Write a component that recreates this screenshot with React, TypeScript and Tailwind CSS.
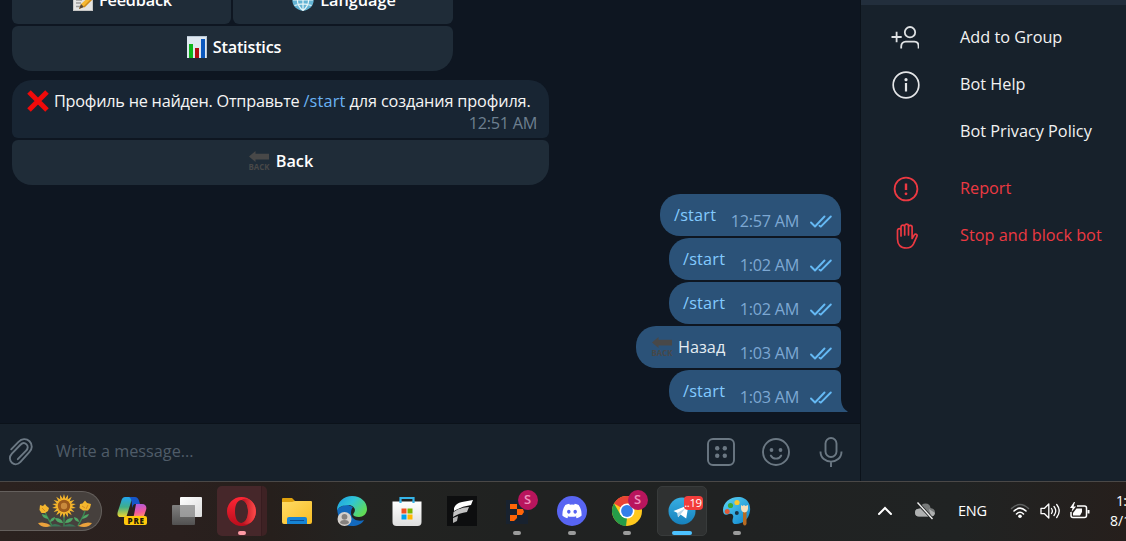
import React from "react";

const SANS = "font-['Open_Sans','Noto_Sans',sans-serif]";

function MemoIcon() {
  return (
    <svg width="20" height="22" viewBox="1 0 20 22" className="shrink-0">
      <rect x="1.500" y="1" width="19" height="20.500" fill="#e4e4e2" stroke="#c6c6c4" />
      <path d="M4 5h9M4 8h7M4 11h6M4 14h5M4 17.500h4" stroke="#9b9b9b" strokeWidth="1.300" />
      <path d="M20 5 9 15l-2 5 5-2L22 8z" fill="#f6b832" />
      <path d="M9 15l-2 5 5-2z" fill="#59493a" />
      <path d="m12 18 10-10" stroke="#cf8b17" strokeWidth="1.500" />
    </svg>
  );
}

function GlobeIcon() {
  return (
    <svg width="22" height="22" viewBox="0 0 22 22" className="shrink-0">
      <circle cx="11" cy="11" r="10.700" fill="#63b3d3" />
      <path
        d="M11 0v22M1 11h20M2.500 5.500c5 2 12 2 17 0M2.500 16.500c5-2 12-2 17 0M11 .5c-7.500 6-7.500 15 0 21M11 .5c7.500 6 7.500 15 0 21"
        fill="none"
        stroke="#e6f5f8"
        strokeWidth="1.200"
      />
    </svg>
  );
}

function ChartIcon() {
  return (
    <svg width="20" height="22" viewBox="0 0 20 22" className="shrink-0">
      <rect width="20" height="22" fill="#dfe8f0" />
      <path d="M0 .5h20M19.500 0v22" stroke="#b9c8d5" />
      <rect x="2" y="8" width="4" height="14" fill="#0eb51c" />
      <rect x="8" y="12" width="4" height="10" fill="#b20d12" />
      <rect x="14" y="3" width="4" height="19" fill="#0b58bd" />
    </svg>
  );
}

function CrossIcon() {
  return (
    <svg width="22" height="22" viewBox="0 0 22 22" className="shrink-0">
      <path d="M2 2 20 20M20 2 2 20" stroke="#f00a0a" strokeWidth="5" />
    </svg>
  );
}

function BackIcon() {
  return (
    <svg width="22" height="22" viewBox="0 0 22 22" className="shrink-0">
      <path d="M1 6.500 7.500 1v2.700H21v5.800H7.500V12z" fill="#484848" />
      <text
        x="0.500"
        y="20"
        textLength="21"
        lengthAdjust="spacingAndGlyphs"
        fontFamily="Open Sans"
        fontWeight="700"
        fontSize="9"
        fill="#484848"
      >
        BACK
      </text>
    </svg>
  );
}

function Checks() {
  return (
    <svg width="22" height="13" viewBox="0 0 22 13" className="shrink-0" fill="none" stroke="#65b9f4" strokeWidth="1.900" strokeLinecap="round" strokeLinejoin="round">
      <path d="m1 7.500 4 4L14.500 1.500M9.500 10.800l1.300.8L20.800 1.500" />
    </svg>
  );
}

function KeyButton({ icon, label, className }: { icon: React.ReactNode; label: string; className: string }) {
  return (
    <div className={`flex items-center justify-center bg-[#1f2c38] pb-[3px] font-semibold text-white ${className}`}>
      {icon}
      <span className="ml-[6px] whitespace-nowrap">{label}</span>
    </div>
  );
}

function Outgoing({
  text,
  time,
  className,
  command = true,
  tail = false,
}: {
  text: string;
  time: string;
  className: string;
  command?: boolean;
  tail?: boolean;
}) {
  return (
    <div className={`relative flex h-[42px] shrink-0 items-start justify-between self-end bg-[#2b5278] pl-[14px] pr-[9px] ${className}`}>
      <div className={`flex h-[41px] items-center ${command ? "tracking-[0.2px] text-[#83caff]" : "text-[#e4ecf2]"}`}>
        {!command && (
          <span className="ml-[1px] mr-[5px]">
            <BackIcon />
          </span>
        )}
        <span className="whitespace-nowrap">{text}</span>
      </div>
      <div className="flex h-[54px] items-center text-[#7da8d3]">
        <span className="mr-[11px] whitespace-nowrap tracking-[-0.3px]">{time}</span>
        <Checks />
      </div>
      {tail && (
        <svg width="8" height="14" viewBox="0 0 8 14" className="absolute -right-[7px] bottom-0">
          <path d="M0 0h1c0 6 2 11 6.500 13.300V14H0z" fill="#2b5278" />
        </svg>
      )}
    </div>
  );
}

function Chat() {
  return (
    <div className="flex h-[423px] flex-col overflow-hidden bg-[#0e1621] pl-[12px] pr-[19px]">
      <div className="flex h-[24px] w-[441px] shrink-0 items-end gap-[2px] overflow-hidden">
        <KeyButton icon={<MemoIcon />} label="Feedback" className="h-[45px] w-[219px] rounded-[6px] pl-[2px] tracking-[-0.2px]" />
        <KeyButton icon={<GlobeIcon />} label="Language" className="h-[45px] w-[220px] rounded-[6px] pl-[2px]" />
      </div>
      <KeyButton
        icon={<ChartIcon />}
        label="Statistics"
        className="mt-[2px] h-[45px] w-[441px] shrink-0 rounded-b-[20px] rounded-t-[6px] pl-[3px] tracking-[-0.2px]"
      />
      <div className="mt-[9px] h-[58px] w-[537px] shrink-0 rounded-b-[6px] rounded-t-[20px] bg-[#182533] pl-[15px] pr-[12px] pt-[10px] text-[#f5f5f5]">
        <div className="flex h-[22px] items-center">
          <CrossIcon />
          <span className="ml-[5px] whitespace-nowrap tracking-[-0.24px]">
            Профиль не найден. Отправьте <span className="tracking-[0.2px] text-[#6ab3f3]">/start</span>{" "}
            <span className="tracking-[-0.13px]">для создания профиля.</span>
          </span>
        </div>
        <div className="text-right leading-[22px] tracking-[-0.3px] text-[#6d7f8f]">12:51 AM</div>
      </div>
      <KeyButton
        icon={<BackIcon />}
        label="Back"
        className="mt-[2px] h-[45px] w-[537px] shrink-0 rounded-b-[20px] rounded-t-[6px]"
      />
      <div className="mt-[9px] flex flex-col gap-[2px]">
        <Outgoing text="/start" time="12:57 AM" className="w-[181px] rounded-[20px] rounded-br-[6px]" />
        <Outgoing text="/start" time="1:02 AM" className="w-[172px] rounded-l-[20px] rounded-r-[6px]" />
        <Outgoing text="/start" time="1:02 AM" className="w-[172px] rounded-l-[20px] rounded-r-[6px]" />
        <Outgoing text="Назад" time="1:03 AM" command={false} className="w-[205px] rounded-l-[20px] rounded-r-[6px]" />
        <Outgoing text="/start" time="1:03 AM" tail className="w-[172px] rounded-l-[20px] rounded-tr-[6px]" />
      </div>
    </div>
  );
}

function Composer() {
  return (
    <div className="flex h-[58px] items-center border-t border-[#0b121a] bg-[#17212b] pb-[1px] pl-[8px] pr-[16px] text-[#6b7883]">
      <svg width="28" height="30" viewBox="0 0 28 30" fill="none" stroke="currentColor" strokeWidth="1.900" strokeLinecap="round" strokeLinejoin="round">
        <path d="M3.200 11.500 10.500 4c3.200-3.300 7.800-3.700 11-.6s2.900 7.800-.2 11L12.500 24c-2.600 2.800-6 3.200-8.600.9-2.700-2.400-2.700-6.200 0-9l8.300-8.700c2-2.100 4.500-2.300 6.300-.6s1.600 4.200-.4 6.300L9.800 21.400M9.800 21.400" transform="translate(0 .8)" />
        <path d="M10.200 19.500 16 13.300" transform="translate(0 .8)" stroke="none" />
      </svg>
      <span className="ml-[20px] flex-1 pb-[2px] text-[#4f5c68]">Write a message...</span>
      <div className="flex items-center gap-[27px]">
        <svg width="28" height="28" viewBox="0 0 28 28" fill="none" stroke="currentColor" strokeWidth="1.900">
          <rect x="1" y="1" width="26" height="26" rx="5" />
          <g fill="currentColor" stroke="none">
            <circle cx="10.200" cy="10.200" r="2.200" />
            <circle cx="17.800" cy="10.200" r="2.200" />
            <circle cx="10.200" cy="17.800" r="2.200" />
            <circle cx="17.800" cy="17.800" r="2.200" />
          </g>
        </svg>
        <svg width="28" height="28" viewBox="0 0 28 28" fill="none" stroke="currentColor" strokeWidth="1.900" strokeLinecap="round">
          <circle cx="14" cy="14" r="13" />
          <path d="M8.800 17.500c2 4.200 8.400 4.200 10.400 0" />
          <circle cx="9.500" cy="12" r="1.900" fill="currentColor" stroke="none" />
          <circle cx="18.500" cy="12" r="1.900" fill="currentColor" stroke="none" />
        </svg>
        <svg width="26" height="30" viewBox="0 0 26 30" fill="none" stroke="currentColor" strokeWidth="1.900" className="ml-px">
          <rect x="7.500" y="1" width="11" height="19" rx="5.500" />
          <path d="M2.500 14.500c0 13.500 21 13.500 21 0M13 24.500V30" />
        </svg>
      </div>
    </div>
  );
}

function MenuRow({ icon, label, className = "" }: { icon?: React.ReactNode; label: string; className?: string }) {
  return (
    <div className={`flex h-[47px] shrink-0 items-center ${className}`}>
      <div className="flex w-[90px] justify-center">{icon}</div>
      <span className="ml-[9px] whitespace-nowrap pb-[1px]">{label}</span>
    </div>
  );
}

function InfoPanel() {
  return (
    <aside className="flex h-[481px] w-[266px] shrink-0 flex-col border-l border-[#0b121a] bg-[#17212b] text-[#f2f2f2]">
      <div className="h-[5px] shrink-0 bg-[#222e3c]" />
      <div className="flex flex-col pt-[9px]">
        <MenuRow
          label="Add to Group"
          icon={
            <svg width="28" height="23" viewBox="0 0 28 23" className="mr-[3px]" fill="none" stroke="#dfe2e4" strokeWidth="1.800">
              <circle cx="19" cy="6.200" r="5.200" />
              <path d="M10.200 22.500v-2c0-3 2-4.800 4.500-4.800h8.600c2.500 0 4.300 1.800 4.300 4.800v2M.5 11h10.200M5.600 5.800v10.400" />
            </svg>
          }
        />
        <MenuRow
          label="Bot Help"
          icon={
            <svg width="28" height="28" viewBox="0 0 28 28" fill="none" stroke="#e4e6e8" strokeWidth="1.700" className="mt-px">
              <circle cx="14" cy="14" r="12.800" />
              <path d="M14 12v8.500" strokeWidth="2.200" />
              <circle cx="14" cy="8.700" r="1.600" fill="#e4e6e8" stroke="none" />
            </svg>
          }
        />
        <MenuRow label="Bot Privacy Policy" />
        <MenuRow
          className="mt-[10px] text-[#ec3942]"
          label="Report"
          icon={
            <svg width="26" height="26" viewBox="0 0 26 26" fill="none" stroke="currentColor" strokeWidth="1.800" className="mt-px">
              <circle cx="13" cy="13" r="11.400" />
              <path d="M13 7.500v6.500" strokeWidth="2.400" />
              <circle cx="13" cy="17.800" r="1.400" fill="currentColor" stroke="none" />
            </svg>
          }
        />
        <MenuRow
          className="text-[#ec3942]"
          label="Stop and block bot"
          icon={
            <svg width="22" height="26" viewBox="0 0 22 26" fill="none" stroke="currentColor" strokeWidth="1.700" strokeLinecap="round" strokeLinejoin="round" className="ml-[2px]">
              <path d="M1.500 16V7.500c0-2.500 3.500-2.500 3.500 0V13M5 12V4c0-2.500 3.700-2.500 3.700 0v8M8.700 4V3c0-2.500 3.800-2.500 3.800 0v9M12.500 5V4c0-2.300 3.600-2.300 3.600 0v11.500l2.200-3.600c1-1.600 3.400-.4 2.600 1.400l-3.400 7.500C16 23.700 13.500 25 10.500 25c-6 0-9-3.500-9-9" />
            </svg>
          }
        />
      </div>
    </aside>
  );
}

function Slot({
  children,
  bar,
  className = "",
  badge,
}: {
  children: React.ReactNode;
  bar?: string;
  className?: string;
  badge?: React.ReactNode;
}) {
  return (
    <div className="flex h-[59px] w-[55px] shrink-0 justify-center pt-[4px]">
      <div className={`relative flex h-[50px] w-[50px] items-center justify-center rounded-[5px] ${className}`}>
        {children}
        {badge}
        {bar && <span className={`absolute bottom-px h-[4px] rounded-full ${bar}`} />}
      </div>
    </div>
  );
}

function ProfileBadge() {
  return (
    <span className="absolute right-[4px] top-[4px] flex h-[20px] w-[20px] items-center justify-center rounded-full bg-[#b9155d] pb-px text-[13px] font-semibold leading-none text-[#f092bd]">
      S
    </span>
  );
}

function Sunflowers() {
  const petals = Array.from({ length: 18 }, (_, i) => i * 20);
  return (
    <svg width="54" height="34" viewBox="0 0 54 34" className="shrink-0">
      <path d="M26 32V22M7 18c2 6 5 9 7 14M47 17c-2 7-5 10-7 15" fill="none" stroke="#3b8a52" strokeWidth="1.300" />
      <path d="M25 29q-7 0-8-5 7 0 8 5zM27 29q7 0 8-5-7 0-8 5zM10 25q-6-1-6-5 6 1 6 5zM12 28q5-1 5-5-5 1-5 5zM44 25q6-1 7-5-6 1-7 5zM41 28q-5-1-5-5 5 1 5 5z" fill="#4fa765" />
      <path d="M0 29q7-2 14 3-10 3-14-3zM54 29q-7-2-14 3 10 3 14-3z" fill="#eba23c" />
      <path d="M10 32.500q7-5 14 0zM24 32.500q8-5 14 0z" fill="#3a7557" />
      <path d="m2 11 3 1 2-2 1.500 2 2.500 2-1 3-3 2H3.500L1.500 16z" fill="#f4b62e" />
      <path d="m42 10 2.500-.5L47 6.500l2 2.500 4 1-1 4-2 2.500h-5L41.500 14z" fill="#f4b62e" />
      <path d="m4 14 3 3M44 12l3 2M50 11l-2 4" stroke="#d98c1c" />
      {petals.map((a) => (
        <path key={a} d="M24.300 6 26 0 27.700 6 26 12z" fill="#f6b62c" transform={`rotate(${a} 26 12)`} />
      ))}
      <circle cx="26" cy="12" r="6.200" fill="#9c5a1c" />
      <circle cx="26" cy="12" r="3.200" fill="#c98a3c" />
    </svg>
  );
}

function Taskbar() {
  return (
    <div className="flex h-[60px] w-full overflow-hidden border-t border-[#4a4847] bg-[linear-gradient(90deg,#2b221f_0%,#2a201e_16%,#261f1c_24%,#232321_32%,#202221_45%,#202222_65%,#202323_85%,#261f1c_100%)] text-white">
      <div className="flex w-[104px] shrink-0 items-start pt-[9px]">
        <div className="flex h-[40px] w-[102px] items-center justify-end rounded-r-[20px] border-y border-r border-[#65605d] bg-[#46403d] pr-[9px]">
          <Sunflowers />
        </div>
      </div>

      <div className="flex shrink-0">
        <Slot>
          <svg width="30" height="30" viewBox="0 0 30 30">
            <defs>
              <linearGradient id="copA" x1="0" y1="0" x2="0" y2="1">
                <stop offset="0" stopColor="#22a5f0" />
                <stop offset=".5" stopColor="#3fae8a" />
                <stop offset="1" stopColor="#f2d72c" />
              </linearGradient>
              <linearGradient id="copB" x1="0" y1="0" x2=".2" y2="1">
                <stop offset="0" stopColor="#a45be8" />
                <stop offset=".6" stopColor="#f4599a" />
                <stop offset="1" stopColor="#ffa35a" />
              </linearGradient>
            </defs>
            <path d="M19 8h6c4 0 5 3 4 6l-2 6c-1 3-3 4-6 4h-8c2 0 3-2 4-5z" fill="url(#copB)" />
            <path d="M9 1h10c-3 0-4 2-5 5l-4 13c-.5 2-2 2-4 2H4c-4 0-4-3-3-6l3-9c1-4 2-5 5-5z" fill="url(#copA)" />
            <path d="M12 1h6c3 0 4 3 5 7h-4c-3 0-3 2-4 4 0-5 0-9-3-11z" fill="#1656c9" />
            <rect x="7" y="20" width="23" height="9" rx="2" fill="#ffc90b" />
            <text x="10.500" y="27.500" fontFamily="Open Sans" fontSize="8" fontWeight="800" textLength="16.500" fill="#1e1a0a">
              PRE
            </text>
          </svg>
        </Slot>
        <Slot>
          <svg width="30" height="28" viewBox="0 0 30 28">
            <defs>
              <linearGradient id="tv" x1="0" y1="0" x2="1" y2="1">
                <stop stopColor="#fff" />
                <stop offset="1" stopColor="#dcdcdc" />
              </linearGradient>
              <linearGradient id="tg" x1="0" y1="0" x2="0" y2="1">
                <stop stopColor="#888" />
                <stop offset="1" stopColor="#555" />
              </linearGradient>
            </defs>
            <rect x="8" y="0" width="22" height="20" rx="1" fill="url(#tv)" />
            <rect x="0" y="8" width="23" height="20" rx="1" fill="url(#tg)" opacity=".92" />
            <path d="M8 8h15v12H8z" fill="#aaa" opacity=".7" />
          </svg>
        </Slot>
        <Slot
          className="bg-[linear-gradient(90deg,#46272a_44px,#371c1f_44px,#371c1f_45px,#3e2224_45px)]"
          bar="w-[8px] bg-[#ff9aa5]"
        >
          <svg width="29" height="29" viewBox="0 0 29 29">
            <defs>
              <linearGradient id="op" x1="0" y1="0" x2="0" y2="1">
                <stop stopColor="#ff2635" />
                <stop offset="1" stopColor="#b90d1c" />
              </linearGradient>
              <linearGradient id="op2" x1="0" y1="0" x2="1" y2="0">
                <stop stopColor="#b60f1c" />
                <stop offset="1" stopColor="#ff4b4b" />
              </linearGradient>
            </defs>
            <path fillRule="evenodd" d="M14.500 0a14.500 14.500 0 1 0 0 29 14.500 14.500 0 0 0 0-29M14.500 3c4 0 6.500 5 6.500 11.500S18.500 26 14.500 26 8 21 8 14.500 10.500 3 14.500 3" fill="url(#op)" />
            <path d="M14.500 3c3-2 7-1.700 10 1 5.800 5.400 5.800 15.500 0 21-3 2.500-7 2.800-10 1 4-.5 6.500-5.500 6.500-11.500S18.500 3.500 14.500 3" fill="url(#op2)" />
          </svg>
        </Slot>
        <Slot>
          <svg width="30" height="28" viewBox="0 0 30 28">
            <defs>
              <linearGradient id="fo" x1="0" y1="0" x2="1" y2="1">
                <stop stopColor="#ffdb65" />
                <stop offset="1" stopColor="#f8bd24" />
              </linearGradient>
            </defs>
            <path d="M0 2q0-1 1-1h9l3 3v6H0z" fill="#e0a10d" />
            <path d="M0 5h10l3-1h16q1 0 1 1v20q0 2-2 2H2q-2 0-2-2z" fill="url(#fo)" />
            <path d="M5 27v-5q0-2 2-2h16q2 0 2 2v5z" fill="#1684d5" />
            <path d="M8 23.500h14" stroke="#0a4c91" />
          </svg>
        </Slot>
        <Slot>
          <svg width="30" height="30" viewBox="0 0 30 30">
            <defs>
              <linearGradient id="ed" x1="0" y1="0" x2="1" y2=".6">
                <stop stopColor="#1c9ce5" />
                <stop offset=".5" stopColor="#30c5d5" />
                <stop offset="1" stopColor="#60db56" />
              </linearGradient>
            </defs>
            <path d="M0 13c1 10 6 17 15 17 5 0 10-2 12-6-5 2-13 0-13-7 0-3 1-5 2-6L9 8z" fill="#1269bd" />
            <path d="M0 14C0 6 7 0 15 0c9 0 15 6 15 13 0 5-4 8-8 8-5 0-7-2-5-4 3-5-2-8-6-8-6 0-10 3-11 5" fill="url(#ed)" />
            <circle cx="7.500" cy="23" r="7" fill="#d4d0cc" />
            <circle cx="7.500" cy="20.800" r="2.900" fill="#85817e" />
            <path d="M3 27q0-3 4.500-3t4.500 3q-4.500 3-9 0" fill="#85817e" />
          </svg>
        </Slot>
        <Slot>
          <svg width="30" height="30" viewBox="0 0 30 30">
            <defs>
              <linearGradient id="st" x1="0" y1="0" x2="0" y2="1">
                <stop stopColor="#fff" />
                <stop offset="1" stopColor="#dedede" />
              </linearGradient>
            </defs>
            <path d="M.5 5.500h29V26q0 4-4 4h-21q-4 0-4-4z" fill="url(#st)" />
            <path d="M8.500 7V2h13v5" fill="none" stroke="#35b4e8" strokeWidth="2.200" />
            <path fill="#f15022" d="M9.500 12.500h5v5h-5z" />
            <path fill="#7db800" d="M15.500 12.500h5v5h-5z" />
            <path fill="#00a2ee" d="M9.500 18.500h5v5h-5z" />
            <path fill="#ffb700" d="M15.500 18.500h5v5h-5z" />
          </svg>
        </Slot>
        <Slot>
          <svg width="30" height="30" viewBox="0 0 30 30">
            <path fill="#0d0e0f" d="M0 0h30v30H0z" />
            <path d="M7 12Q9 7 15 6l11-2-2 5q-9 1-17 6z" fill="#fff" />
            <path d="M6.500 16Q14 11 22 11l-2 5q-8 1-14 5z" fill="#c3c3c3" />
            <path d="m6 22 5-2-1 5-4 2z" fill="#b2b2b2" />
          </svg>
        </Slot>
        <Slot bar="w-[8px] bg-[#9a9b9b]" badge={<ProfileBadge />}>
          <svg width="22" height="24" viewBox="0 0 22 24" className="mt-[2px]">
            <path fill="#18222f" d="M0 0h22v24H0z" />
            <path d="M4 4h7v5H4zM11 9h6l1 3-2 3h-5zM4 15h7v3l-3 3H4z" fill="#ff6508" />
          </svg>
        </Slot>
        <Slot bar="w-[8px] bg-[#9a9b9b]">
          <svg width="30" height="30" viewBox="0 0 30 30">
            <circle cx="15" cy="15" r="15" fill="#5865f2" />
            <path
              transform="translate(5.400 5.400) scale(.8)"
              d="M20.317 4.370a19.800 19.800 0 0 0-4.885-1.515l-.69 1.330a18.270 18.270 0 0 0-5.487 0l-.68-1.330A19.740 19.740 0 0 0 3.677 4.370C.533 9.046-.32 13.580.1 18.058a19.900 19.900 0 0 0 5.993 3.030l1.300-2.100-1.900-.9.400-.3a14.100 14.100 0 0 0 12.200 0l.4.3-1.900.9 1.300 2.100a19.800 19.800 0 0 0 6-3.030c.5-5.177-.838-9.674-3.576-13.688M8.020 15.330c-1.183 0-2.157-1.085-2.157-2.419s.956-2.419 2.157-2.419 2.176 1.096 2.157 2.420c0 1.333-.956 2.418-2.157 2.418m7.975 0c-1.183 0-2.157-1.085-2.157-2.419s.955-2.419 2.157-2.419 2.176 1.096 2.157 2.420c0 1.333-.946 2.418-2.157 2.418"
              fill="#fff"
            />
          </svg>
        </Slot>
        <Slot bar="w-[8px] bg-[#9a9b9b]" badge={<ProfileBadge />}>
          <svg width="30" height="30" viewBox="0 0 30 30">
            <circle cx="15" cy="15" r="15" fill="#ffc91e" />
            <path d="M15 15 2 7.500A15 15 0 0 1 28 7.500H15z" fill="#e94335" />
            <path d="M2 7.500 8.500 18.800 15 22l-1 8A15 15 0 0 1 2 7.500" fill="#259c49" />
            <circle cx="15" cy="15" r="7.500" fill="#fff" />
            <circle cx="15" cy="15" r="5.900" fill="#337fea" />
          </svg>
        </Slot>
        <Slot
          className="border border-[#383b3b] bg-[#2f3131]"
          bar="w-[20px] bg-[#4cc2ff] -mb-px"
          badge={
            <span className="absolute right-[3px] top-[9px] flex h-[14px] w-[19px] items-center justify-center rounded-[4px] bg-[#f23d3b] pb-px text-[11.5px] leading-none tracking-[-0.4px] text-white">
              ..19
            </span>
          }
        >
          <svg width="28" height="28" viewBox="0 0 28 28">
            <defs>
              <linearGradient id="te" x1="0" y1="0" x2="0" y2="1">
                <stop stopColor="#37aee2" />
                <stop offset="1" stopColor="#1681bd" />
              </linearGradient>
            </defs>
            <circle cx="14" cy="14" r="13.500" fill="url(#te)" />
            <path d="M5.500 14 20.500 8l-2.300 13.500-5.700-4-2.500 2.700-.5-4.200z" fill="#fff" />
            <path d="m9.500 16 8-5-5 6.500-2.500 2.700z" fill="#b8d7ea" />
          </svg>
        </Slot>
        <Slot bar="w-[8px] bg-[#9a9b9b]">
          <svg width="30" height="30" viewBox="0 0 30 30">
            <defs>
              <linearGradient id="pa" x1="0" y1="0" x2="1" y2="1">
                <stop stopColor="#5fd5f5" />
                <stop offset="1" stopColor="#0a83cd" />
              </linearGradient>
            </defs>
            <path d="M18 1c7 1 11 7 10 14-1 8-7 13-14 13-4 0-4-3-3-6s-1-5-4-4c-4 2-6 0-6-4C1 6 9 0 18 1" fill="url(#pa)" />
            <circle cx="15" cy="6.500" r="2.600" fill="#f9c72f" />
            <circle cx="8.500" cy="9.500" r="2.600" fill="#38a83c" />
            <circle cx="5.200" cy="15.500" r="2.500" fill="#df5936" />
            <circle cx="14.800" cy="17" r="2" fill="#183345" />
            <path d="M21 15h3.500v13q-1.700 3-3.500 0z" fill="#b66b23" />
            <path d="m19 9 1.500 1L22 9l1.500 1L26 9v3q0 4-3.300 4.500Q19 16 19 12z" fill="#f4dfbc" />
          </svg>
        </Slot>
      </div>

      <div className="ml-[113px] flex h-[58px] shrink-0 items-center">
        <svg width="16" height="10" viewBox="0 0 16 10" fill="none" stroke="#fff" strokeWidth="2" strokeLinecap="round">
          <path d="m2 8 6-6 6 6" />
        </svg>
        <svg width="22" height="18" viewBox="0 0 22 18" className="ml-[21px]">
          <path d="M5 14.500q-4 0-4-4t5-4q1-5 5.500-5T16.500 6q4.500.5 4.500 4.500t-4 4z" fill="#777a7a" />
          <path d="m6 6.500 9 8H5q-4 0-4-4t5-4M15 7l6 4q-1 3.500-4 3.500z" fill="#aeb0b0" />
          <path d="m3.500.5 15 16.500" stroke="#202323" strokeWidth="3" />
          <path d="m3.500.5 15 16.500" stroke="#f1f1f1" strokeWidth="1.400" />
        </svg>
        <span className="ml-[22px] w-[30px] text-[14.5px] font-normal tracking-[-0.2px]">ENG</span>
        <svg width="20" height="16" viewBox="0 0 20 16" className="ml-[22px]" fill="none" strokeLinecap="round">
          <path d="M1.500 5.500q8.500-8 17 0" stroke="#5f6161" strokeWidth="1.500" />
          <path d="M4 8q6-5.600 12 0M6.500 11q3.500-3.500 7 0" stroke="#fff" strokeWidth="1.600" />
          <circle cx="10" cy="13.300" r="1.800" fill="#fff" />
        </svg>
        <svg width="21" height="18" viewBox="0 0 21 18" className="ml-[10px]" fill="none" stroke="#fff" strokeWidth="1.300" strokeLinecap="round" strokeLinejoin="round">
          <path d="M1 6.300h3.500L8.800 2v14l-4.300-4.300H1zM11.500 6.500q1.700 2.500 0 5M14 4.500q3.500 4.500 0 9M16.700 2.500q5 6.500 0 13" />
        </svg>
        <svg width="21" height="18" viewBox="0 0 21 18" className="ml-[8px]" fill="none">
          <path d="M8 4h7.500q2 0 2 2v7.500q0 2-2 2H4q-2 0-2-2V10" stroke="#fff" strokeWidth="1.500" />
          <path d="M7.500 6.500H13v3.500l-2 3.500H4V11z" fill="#fff" />
          <path d="M18.500 8h2v3.500h-2z" fill="#fff" />
          <path d="M5 0 1 6h2.500L2.500 10 7 4.500H4.500L6 0z" fill="#fff" />
        </svg>
      </div>

      <div className="ml-[20px] w-[18px] shrink-0 overflow-hidden whitespace-nowrap pt-[9px] text-[14px] leading-[20px]">
        <div className="pl-[6px] tracking-[-0.8px]">1:03 AM</div>
        <div>8/12/2025</div>
      </div>
    </div>
  );
}

export default function App() {
  return (
    <div className={`flex h-[541px] w-[1126px] flex-col overflow-hidden text-[16.25px] leading-[22px] ${SANS}`}>
      <div className="flex h-[481px] shrink-0">
        <main className="flex w-[860px] shrink-0 flex-col">
          <Chat />
          <Composer />
        </main>
        <InfoPanel />
      </div>
      <Taskbar />
    </div>
  );
}
